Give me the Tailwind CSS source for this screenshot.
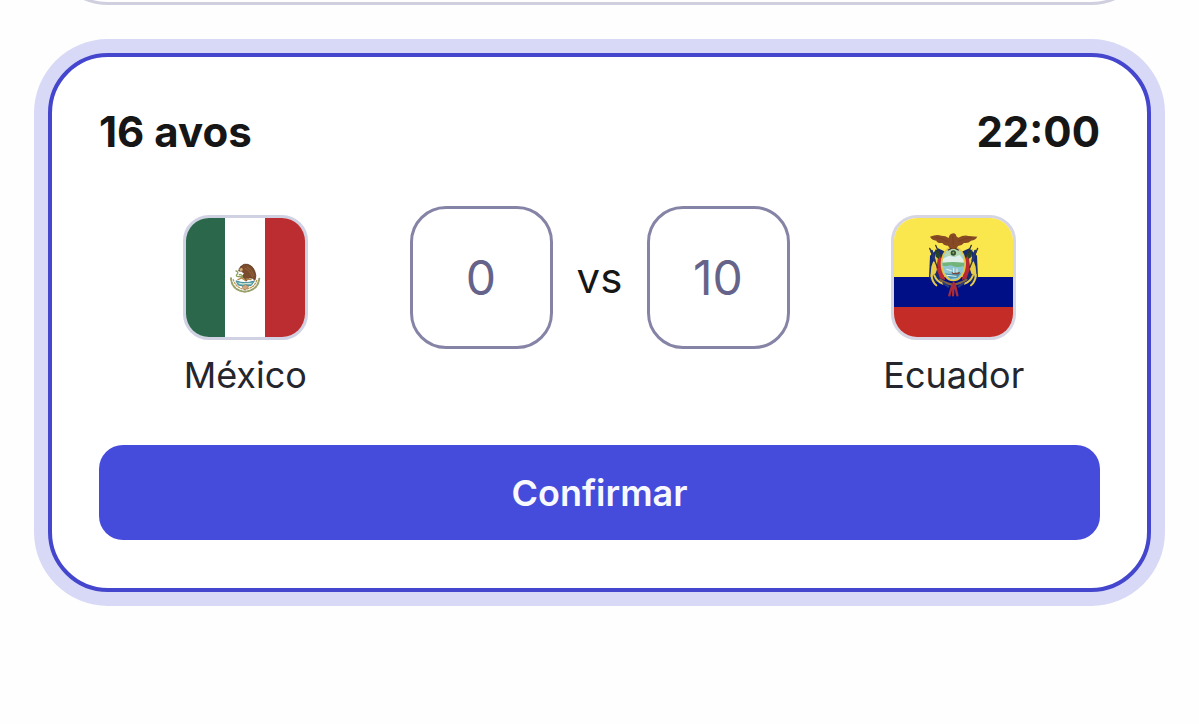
<!DOCTYPE html>
<html lang="es">
<head>
<meta charset="utf-8">
<meta name="viewport" content="width=device-width, initial-scale=1">
<title>Pronóstico</title>
<script src="https://cdn.jsdelivr.net/npm/@tailwindcss/browser@4"></script>
</head>
<body class="bg-[#fefefe] font-['Inter',sans-serif] text-[#161616]">
<main class="flex flex-col gap-12 overflow-hidden px-12 pb-12">
  <div class="-mt-[155px] h-40 rounded-[60px] border-3 border-[#d0cfdf] bg-white"></div>

  <form class="flex flex-col gap-12 rounded-[60px] border-4 border-[#4446ce] bg-white px-[47px] py-12 ring-14 ring-[#d8d8f7]">
    <header class="flex items-center justify-between text-[42px] leading-[53px] font-bold">
      <h2>16 avos</h2>
      <time datetime="22:00">22:00</time>
    </header>

    <div class="flex items-start gap-[18px]">
      <div class="flex flex-1 flex-col items-center gap-[13px] pt-[9px]">
        <svg class="size-[125px] rounded-[26px] border-3 border-[#d0d2e4]" viewBox="0 0 119 119" role="img" aria-label="Bandera de México">
          <rect x="39" width="40" height="119" fill="#fff"/>
          <rect width="39" height="119" fill="#2b684b"/>
          <rect x="79" width="40" height="119" fill="#bb2d30"/>
          <g transform="translate(36 36) scale(.3333)" fill="none" stroke-linecap="round" stroke-linejoin="round">
            <path d="M27 73Q30 108 67 113Q108 110 112 72" stroke="#9aa06a" stroke-width="6" stroke-dasharray="7 5"/>
            <path d="M34 77Q41 101 67 106Q98 103 105 77" stroke="#b99a55" stroke-width="4" stroke-dasharray="4 5"/>
            <path d="M43 81Q68 91 97 81L88 94Q68 101 49 93Z" fill="#6eb4bb" stroke="#428998" stroke-width="3"/>
            <path d="M61 98L70 91L80 98L70 108Z" fill="#d5a27a" stroke="#8b7350" stroke-width="2"/>
            <path d="M57 37Q65 27 78 31Q93 36 98 50Q105 66 99 79Q91 70 82 72L72 82L67 73L59 68L67 59L59 52L50 51Q50 43 57 37Z" fill="#7b4c2c" stroke="#563720" stroke-width="2"/>
            <path d="M76 39Q91 48 96 65M69 43Q85 50 92 70" stroke="#a0724a" stroke-width="2"/>
            <path d="M52 45L60 41L63 49L54 52Z" fill="#d8b07b"/>
            <path d="M42 51Q50 53 46 60Q39 66 48 68Q57 66 62 73M52 62Q59 60 61 67" stroke="#8e9f5c" stroke-width="4"/>
            <path d="M48 77L59 72L70 79M74 75L87 77" stroke="#b28843" stroke-width="4"/>
            <path d="M52 88L63 90L75 88L87 89" stroke="#d9e8d6" stroke-width="3"/>
          </g>
        </svg>
        <span class="text-[36px] leading-[44px] text-[#24252d]">México</span>
      </div>

      <div class="flex items-center">
        <input type="text" inputmode="numeric" aria-label="Goles de México" value="0" class="size-[143px] rounded-[36px] border-3 border-[#8584a6] text-center text-[48px] text-[#65638a]">
        <span class="w-[94px] text-center text-[42px] leading-[52px]">vs</span>
        <input type="text" inputmode="numeric" aria-label="Goles de Ecuador" value="10" class="size-[143px] rounded-[36px] border-3 border-[#8584a6] text-center text-[48px] text-[#65638a]">
      </div>

      <div class="flex flex-1 flex-col items-center gap-[13px] pt-[9px]">
        <svg class="size-[125px] rounded-[26px] border-3 border-[#d6d5e3]" viewBox="0 0 119 119" role="img" aria-label="Bandera de Ecuador">
          <rect y="89" width="119" height="30" fill="#c42c27"/>
          <rect y="59" width="119" height="30" fill="#000f86"/>
          <rect width="119" height="59" fill="#fae74e"/>
          <g transform="translate(26 7) scale(.3333)" stroke-linecap="round" stroke-linejoin="round">
            <path d="M54 70L30 92L27 158L39 175L70 166L76 80Z" fill="#162c70"/>
            <path d="M148 70L171 92L174 158L162 175L131 166L125 80Z" fill="#162c70"/>
            <path d="M49 82L34 125L31 157L47 145L58 112Z" fill="#e8ce48"/>
            <path d="M152 82L167 125L170 157L154 145L143 112Z" fill="#e8ce48"/>
            <path d="M57 80L49 128L60 160L75 165L67 112Z" fill="#b92a35"/>
            <path d="M143 80L151 128L140 160L126 165L134 112Z" fill="#b92a35"/>
            <path d="M29 70L53 128M47 61L62 95M173 70L149 128M154 61L139 95" fill="none" stroke="#37352a" stroke-width="4"/>
            <path d="M35 78L43 106M166 78L158 106" fill="none" stroke="#263373" stroke-width="8"/>
            <path d="M45 72L60 91L56 102L47 95ZM157 72L142 91L146 102L155 95Z" fill="#244527"/>
            <path d="M35 149Q35 169 49 181M43 151Q51 170 68 176M167 149Q167 169 153 181M159 151Q151 170 134 176" fill="none" stroke="#e1c84f" stroke-width="6"/>
            <path d="M61 165Q82 177 98 179Q122 176 139 164" fill="none" stroke="#81633d" stroke-width="7"/>
            <path d="M70 174L85 185M131 174L116 185" stroke="#293a84" stroke-width="6"/>
            <path d="M101 174L99 211M97 180L88 211M105 180L112 211" fill="none" stroke="#a72b38" stroke-width="7"/>
            <ellipse cx="100" cy="116" rx="38" ry="53" fill="#e5c53e"/>
            <ellipse cx="100" cy="116" rx="33" ry="48" fill="#9bd4df"/>
            <path d="M71 95Q80 68 100 68Q120 68 129 95Z" fill="#b3d6b3"/>
            <path d="M69 101L87 92L103 97L119 90L130 104L132 115H68Z" fill="#e1efeb"/>
            <path d="M67 113Q98 109 133 113L132 125Q101 128 68 123Z" fill="#72b47a"/>
            <path d="M69 126L91 121L111 127L131 124Q128 151 114 159L91 161Q72 147 69 126Z" fill="#90c6d2"/>
            <path d="M74 143Q89 150 124 143L112 159L91 161Z" fill="#5095b2"/>
            <path d="M94 140L102 144L121 140L116 148H98Z" fill="#764c42"/>
            <path d="M101 130V142M111 132V142M80 133L94 137M81 151L108 154" fill="none" stroke="#eef1e9" stroke-width="3"/>
            <circle cx="100" cy="84" r="8" fill="#31512f"/>
            <circle cx="100" cy="83" r="3" fill="#a7a254"/>
            <path d="M30 35Q49 27 64 32Q77 32 86 39Q88 26 100 25Q108 25 109 34L115 38Q132 29 146 33L172 35Q167 46 153 47Q146 56 132 54Q125 63 114 63L108 72H91L84 62Q72 62 67 54Q52 56 49 47Q35 46 30 35Z" fill="#874a24"/>
            <path d="M46 37Q64 38 84 50M155 38Q135 38 116 49M98 35L100 58" fill="none" stroke="#70401f" stroke-width="2"/>
            <path d="M93 71L85 75M107 71L115 75" stroke="#4d3923" stroke-width="4"/>
          </g>
        </svg>
        <span class="text-[36px] leading-[44px] text-[#24252d]">Ecuador</span>
      </div>
    </div>

    <button type="submit" class="h-[95px] w-full rounded-3xl bg-[#454bda] text-[36px] leading-[44px] font-semibold text-[#f8f9ff]">Confirmar</button>
  </form>
</main>
</body>
</html>
